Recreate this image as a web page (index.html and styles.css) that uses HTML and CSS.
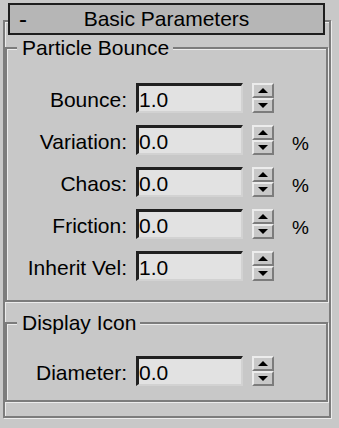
FILE: index.html
```html
<!DOCTYPE html>
<html>
<head>
<meta charset="utf-8">
<link rel="stylesheet" href="styles.css">
</head>
<body>
<div class="rollout">
  <div class="rollout-title"><span class="toggle">-</span><span class="title">Basic Parameters</span><span></span></div>
  <fieldset class="group group-bounce">
    <legend>Particle Bounce</legend>
    <div class="rows">
      <div class="row"><label class="lbl">Bounce:</label><input class="field" value="1.0"><div class="spin"><span class="spin-btn up"></span><span class="spin-btn down"></span></div></div>
      <div class="row"><label class="lbl">Variation:</label><input class="field" value="0.0"><div class="spin"><span class="spin-btn up"></span><span class="spin-btn down"></span></div><span class="pct">%</span></div>
      <div class="row"><label class="lbl">Chaos:</label><input class="field" value="0.0"><div class="spin"><span class="spin-btn up"></span><span class="spin-btn down"></span></div><span class="pct">%</span></div>
      <div class="row"><label class="lbl">Friction:</label><input class="field" value="0.0"><div class="spin"><span class="spin-btn up"></span><span class="spin-btn down"></span></div><span class="pct">%</span></div>
      <div class="row"><label class="lbl">Inherit Vel:</label><input class="field" value="1.0"><div class="spin"><span class="spin-btn up"></span><span class="spin-btn down"></span></div></div>
    </div>
  </fieldset>
  <fieldset class="group group-display">
    <legend>Display Icon</legend>
    <div class="rows">
      <div class="row"><label class="lbl">Diameter:</label><input class="field" value="0.0"><div class="spin"><span class="spin-btn up"></span><span class="spin-btn down"></span></div></div>
    </div>
  </fieldset>
</div>
</body>
</html>
```
FILE: styles.css
```css
html, body {
  margin: 0;
  background: #c8c8c8;
}
body {
  width: 339px;
  height: 428px;
  overflow: hidden;
  font-family: "Liberation Sans", Arial, sans-serif;
  font-size: 21px;
  color: #000;
}
.rollout {
  box-sizing: border-box;
  margin: 20px 0 0 3px;
  width: 328px;
  height: 398px;
  border: 2px solid #7c7c7c;
  box-shadow: inset 1px 1px 0 #ececec, 1px 1px 0 #ececec;
}
.rollout-title {
  box-sizing: border-box;
  margin: -19px 0 0 3px;
  width: 317px;
  height: 32px;
  border: 2px solid #1e1e1e;
  background: #b6b6b6;
  display: grid;
  grid-template-columns: 1fr auto 1fr;
  line-height: 28px;
}
.toggle {
  padding-left: 9px;
  font-size: 24px;
}
.title {
  white-space: nowrap;
}
.group {
  box-sizing: border-box;
  margin: 1px 0 0 0;
  width: 323px;
  min-width: 0;
  padding: 23px 0 19px;
  border: 2px solid #7c7c7c;
  box-shadow: inset 1px 1px 0 #ececec, 1px 1px 0 #ececec;
}
.group-display {
  margin-top: 9px;
  padding: 21px 0 14px;
}
.group legend {
  margin-left: 10px;
  padding: 0 4px 0 5px;
  line-height: 24px;
  background: #c8c8c8;
  white-space: nowrap;
}
.rows {
  display: flex;
  flex-direction: column;
  gap: 12px;
}
.row {
  display: flex;
  height: 30px;
}
.lbl {
  box-sizing: border-box;
  width: 120px;
  text-align: right;
  padding-top: 4px;
  line-height: 26px;
  white-space: nowrap;
}
.field {
  box-sizing: border-box;
  width: 107px;
  height: 30px;
  margin: 0 0 0 9px;
  border-style: solid;
  border-width: 3px 2px 2px 3px;
  border-color: #202020 #d2d2d2 #d2d2d2 #202020;
  background: #e2e2e2;
  padding: 3px 0 0 0;
  font-family: inherit;
  font-size: 21px;
  color: #000;
  outline: none;
}
.spin {
  margin-left: 9px;
  width: 22px;
  height: 30px;
  display: flex;
  flex-direction: column;
}
.spin-btn {
  flex: 1;
  box-sizing: border-box;
  border-style: solid;
  border-width: 2px;
  border-color: #ececec #7c7c7c #7c7c7c #ececec;
  display: flex;
  align-items: center;
  justify-content: center;
  background: #c8c8c8;
}
.spin-btn::before {
  content: "";
  width: 0;
  height: 0;
  border-left: 5px solid transparent;
  border-right: 5px solid transparent;
}
.up::before {
  border-bottom: 5px solid #000;
}
.down::before {
  border-top: 5px solid #000;
}
.pct {
  margin-left: 18px;
  padding-top: 6px;
  line-height: 26px;
  font-size: 19px;
}
```
